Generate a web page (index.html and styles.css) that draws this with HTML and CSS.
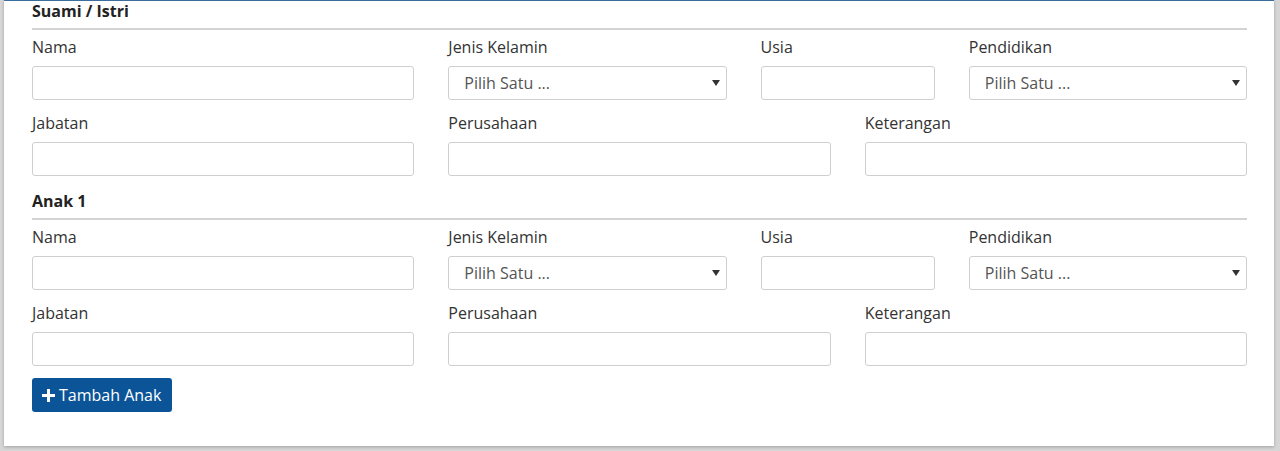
FILE: index.html
```html
<!DOCTYPE html>
<html lang="id">
<head>
<meta charset="utf-8">
<title>Keluarga</title>
<link rel="stylesheet" href="styles.css">
</head>
<body>
<div class="card">
  <section class="member">
    <h4 class="member-title">Suami / Istri</h4>
    <div class="grid">
      <div class="field span4"><label>Nama</label><input class="control" type="text"></div>
      <div class="field span3"><label>Jenis Kelamin</label>
        <div class="select-wrap"><select class="control select"><option>Pilih Satu ...</option></select>
        <svg class="caret" width="8" height="6" viewBox="0 0 8 6"><path d="M0 0H8L4 6Z" fill="#333"/></svg></div></div>
      <div class="field span2"><label>Usia</label><input class="control" type="text"></div>
      <div class="field span3"><label>Pendidikan</label>
        <div class="select-wrap"><select class="control select"><option>Pilih Satu ...</option></select>
        <svg class="caret" width="8" height="6" viewBox="0 0 8 6"><path d="M0 0H8L4 6Z" fill="#333"/></svg></div></div>
      <div class="field span4"><label>Jabatan</label><input class="control" type="text"></div>
      <div class="field span4"><label>Perusahaan</label><input class="control" type="text"></div>
      <div class="field span4"><label>Keterangan</label><input class="control" type="text"></div>
    </div>
  </section>
  <section class="member">
    <h4 class="member-title">Anak 1</h4>
    <div class="grid">
      <div class="field span4"><label>Nama</label><input class="control" type="text"></div>
      <div class="field span3"><label>Jenis Kelamin</label>
        <div class="select-wrap"><select class="control select"><option>Pilih Satu ...</option></select>
        <svg class="caret" width="8" height="6" viewBox="0 0 8 6"><path d="M0 0H8L4 6Z" fill="#333"/></svg></div></div>
      <div class="field span2"><label>Usia</label><input class="control" type="text"></div>
      <div class="field span3"><label>Pendidikan</label>
        <div class="select-wrap"><select class="control select"><option>Pilih Satu ...</option></select>
        <svg class="caret" width="8" height="6" viewBox="0 0 8 6"><path d="M0 0H8L4 6Z" fill="#333"/></svg></div></div>
      <div class="field span4"><label>Jabatan</label><input class="control" type="text"></div>
      <div class="field span4"><label>Perusahaan</label><input class="control" type="text"></div>
      <div class="field span4"><label>Keterangan</label><input class="control" type="text"></div>
    </div>
  </section>
  <button class="btn-add" type="button">
    <svg class="plus" width="13" height="13" viewBox="0 0 13 13"><path d="M5 0H8V5H13V8H8V13H5V8H0V5H5Z" fill="#fff"/></svg>Tambah Anak
  </button>
</div>
</body>
</html>
```

FILE: styles.css
```css
html, body {
  margin: 0;
  padding: 0;
}
body {
  background: #d6d6d6;
  font-family: "Open Sans", "Liberation Sans", sans-serif;
  color: #333;
  height: 451px;
  overflow: hidden;
}
.card {
  background: #fff;
  margin: 0 6px 0 4px;
  border-top: 1px solid #3b6e9c;
  box-shadow: 0 1px 3px rgba(0, 0, 0, 0.25);
  padding: 0 27px 34px 28px;
  height: 411px;
}
.member-title {
  margin: -1px 0 6px;
  font-size: 16px;
  line-height: 22px;
  font-weight: 700;
  color: #222;
  padding-bottom: 6px;
  border-bottom: 2px solid #d3d3d3;
}
.member + .member {
  margin-top: 15px;
}
.grid {
  display: grid;
  grid-template-columns: repeat(12, 1fr);
  column-gap: 34px;
  row-gap: 12px;
}
.span2 { grid-column: span 2; }
.span3 { grid-column: span 3; }
.span4 { grid-column: span 4; }
.field {
  display: flex;
  flex-direction: column;
}
.field label {
  font-size: 16px;
  line-height: 22px;
  color: #333;
  margin-bottom: 8px;
}
.control {
  box-sizing: border-box;
  height: 34px;
  width: 100%;
  border: 1px solid #cfcfcf;
  border-radius: 3px;
  background: #fff;
  font-family: "Open Sans", "Liberation Sans", sans-serif;
  font-size: 16px;
  color: #555;
  padding: 0 15px;
  margin: 0;
  outline: none;
}
.select-wrap {
  position: relative;
}
.select {
  -webkit-appearance: none;
  appearance: none;
}
.caret {
  position: absolute;
  right: 7px;
  top: 14px;
}
.btn-add {
  margin-top: 12px;
  height: 34px;
  width: 140px;
  display: flex;
  align-items: center;
  gap: 4px;
  padding: 0 0 0 10px;
  border: none;
  border-radius: 3px;
  background: #0b5497;
  color: #fff;
  font-family: "Open Sans", "Liberation Sans", sans-serif;
  font-size: 16px;
}
.plus {
  flex: none;
}
```
